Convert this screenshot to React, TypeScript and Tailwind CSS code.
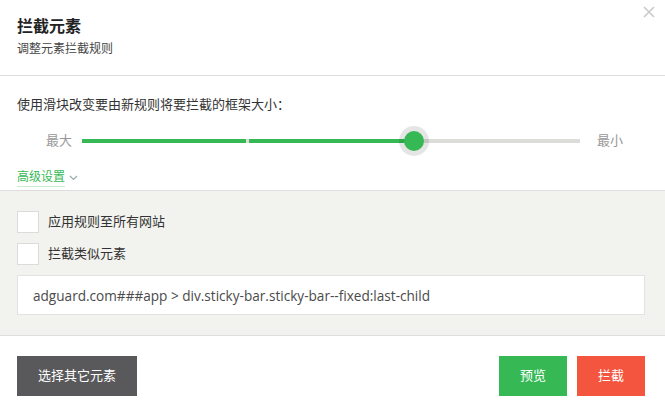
import React, { useState } from "react";

const FONT = "font-['Open_Sans','Noto_Sans_CJK_SC',sans-serif]";

export default function App() {
  const [allSites, setAllSites] = useState(false);
  const [similar, setSimilar] = useState(false);
  const [rule, setRule] = useState("adguard.com###app > div.sticky-bar.sticky-bar--fixed:last-child");

  return (
    <div className={`relative w-[665px] h-[414px] bg-white text-[#333] ${FONT}`}>
      {/* close */}
      <button className="absolute top-[6px] right-[10px] w-[12px] h-[12px] flex items-center justify-center" aria-label="Close">
        <svg width="12" height="12" viewBox="0 0 12 12">
          <path d="M1 1L11 11M11 1L1 11" stroke="#cbcbcb" strokeWidth="1.7" />
        </svg>
      </button>

      {/* header */}
      <div className="h-[76px] px-[17px] pt-[15px] border-b border-[#dedede]">
        <div className="text-[16px] leading-[22px] font-bold text-[#222]">拦截元素</div>
        <div className="mt-[4px] text-[12px] leading-[16px] text-[#444]">调整元素拦截规则</div>
      </div>

      {/* slider area */}
      <div className="h-[114px] px-[17px] pt-[18px]">
        <div className="text-[13px] leading-[20px] text-[#333]">使用滑块改变要由新规则将要拦截的框架大小：</div>
        <div className="mt-[10px] flex items-center h-[34px]">
          <span className="w-[65px] pl-[29px] text-[13px] text-[#999]">最大</span>
          <div className="relative w-[498px] h-[4px] bg-[#dcdcd9]">
            <div className="absolute left-0 top-0 h-[4px] w-[164px] bg-[#36b955]" />
            <div className="absolute left-[167px] top-0 h-[4px] w-[165px] bg-[#36b955]" />
            <div className="absolute left-[317px] top-[-13px] w-[30px] h-[30px] rounded-full bg-black/10 flex items-center justify-center">
              <div className="w-[20px] h-[20px] rounded-full bg-[#36b955]" />
            </div>
          </div>
          <span className="ml-[17px] text-[13px] text-[#999]">最小</span>
        </div>
        <div className="mt-[10px] flex items-center gap-[4px]">
          <span className="text-[12px] leading-[18px] text-[#36b955] border-b border-[#c9ecd1]">高级设置</span>
          <svg width="9" height="6" viewBox="0 0 9 6">
            <path d="M1 1l3.5 3.5L8 1" stroke="#9aa" strokeWidth="1.2" fill="none" />
          </svg>
        </div>
      </div>

      {/* advanced */}
      <div className="h-[146px] bg-[#f2f2ee] border-y border-[#dedede] px-[17px] pt-[20px]">
        <label className="flex items-center gap-[9px] h-[22px] cursor-pointer">
          <input type="checkbox" className="hidden" checked={allSites} onChange={() => setAllSites(!allSites)} />
          <span className="w-[22px] h-[22px] bg-white border border-[#dcdcdc]" />
          <span className="text-[13px] text-[#333]">应用规则至所有网站</span>
        </label>
        <label className="mt-[10px] flex items-center gap-[9px] h-[22px] cursor-pointer">
          <input type="checkbox" className="hidden" checked={similar} onChange={() => setSimilar(!similar)} />
          <span className="w-[22px] h-[22px] bg-white border border-[#dcdcdc]" />
          <span className="text-[13px] text-[#333]">拦截类似元素</span>
        </label>
        <input
          value={rule}
          onChange={(e) => setRule(e.target.value)}
          className="mt-[10px] w-[628px] h-[40px] px-[15px] bg-white border border-[#e3e3e3] text-[13.6px] text-[#4a4a4a] outline-none"
        />
      </div>

      {/* footer */}
      <div className="pl-[17px] pr-[20px] pt-[20px] flex items-center">
        <button className="w-[120px] h-[40px] bg-[#59595b] text-white text-[13px]">选择其它元素</button>
        <div className="ml-auto flex gap-[10px]">
          <button className="w-[68px] h-[40px] bg-[#36b955] text-white text-[13px]">预览</button>
          <button className="w-[68px] h-[40px] bg-[#f4553e] text-white text-[13px]">拦截</button>
        </div>
      </div>
    </div>
  );
}
